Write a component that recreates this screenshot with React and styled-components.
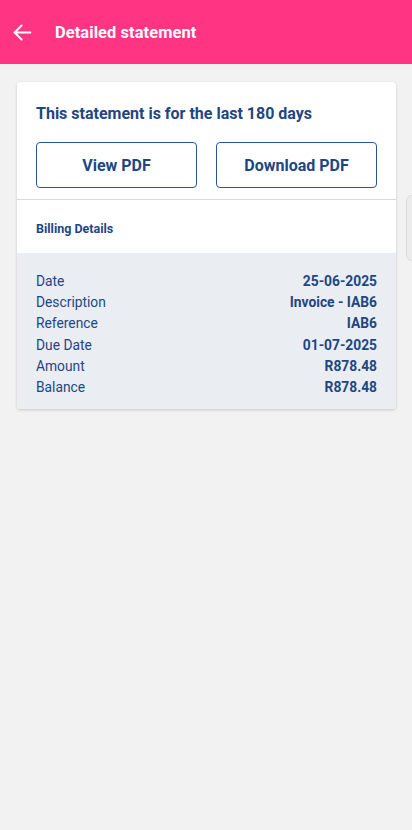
import styled, { createGlobalStyle } from "styled-components";

const GlobalStyle = createGlobalStyle`
  html, body {
    margin: 0;
    padding: 0;
    background: #f2f2f2;
    font-family: Roboto, "Noto Sans", Arial, sans-serif;
  }
  * { box-sizing: border-box; }
`;

const Page = styled.div`
  position: relative;
  min-height: 830px;
  background: #f2f2f2;
`;

const Header = styled.header`
  height: 64px;
  background: #ff3483;
  display: flex;
  align-items: center;
  padding: 0 0 0 12px;
  gap: 22px;
  color: #fff;
`;

const BackButton = styled.button`
  background: none;
  border: none;
  padding: 0;
  display: flex;
  color: #fff;
  cursor: pointer;
`;

const Title = styled.h1`
  margin: 0;
  font-size: 16.4px;
  font-weight: 700;
  letter-spacing: 0.1px;
`;

const Content = styled.main`
  padding: 18px 16px 0 17px;
`;

const Card = styled.section`
  background: #fff;
  border-radius: 4px;
  box-shadow: 0 1px 3px rgba(0, 0, 0, 0.18);
  overflow: hidden;
  color: #1e4684;
`;

const Intro = styled.div`
  padding: 20px 19px 11px;
  border-bottom: 1px solid #d9d9d9;
`;

const Lead = styled.p`
  margin: 0 0 16px;
  font-size: 16px;
  font-weight: 700;
  line-height: 24px;
`;

const ButtonRow = styled.div`
  display: grid;
  grid-template-columns: 1fr 1fr;
  gap: 19px;
`;

const OutlineButton = styled.button`
  height: 46px;
  background: #fff;
  border: 1.5px solid #2b5495;
  border-radius: 4px;
  color: #1e4684;
  font-family: inherit;
  font-size: 16px;
  font-weight: 700;
  cursor: pointer;
`;

const SectionTitle = styled.h2`
  margin: 0;
  padding: 21px 19px 16px;
  font-size: 12.5px;
  font-weight: 700;
  line-height: 16px;
`;

const Details = styled.dl`
  margin: 0;
  padding: 18px 19px 11px;
  background: #eaedf2;
  display: grid;
  grid-template-columns: 1fr auto;
  font-size: 13.8px;
  line-height: 21.2px;
`;

const Label = styled.dt`
  font-weight: 400;
`;

const Value = styled.dd`
  margin: 0;
  font-weight: 700;
  text-align: right;
`;

const EdgeTab = styled.div`
  position: absolute;
  right: -6px;
  top: 195px;
  width: 12px;
  height: 66px;
  border: 1px solid #dcdcdc;
  border-radius: 6px;
  background: #ececec;
`;

const rows = [
  ["Date", "25-06-2025"],
  ["Description", "Invoice - IAB6"],
  ["Reference", "IAB6"],
  ["Due Date", "01-07-2025"],
  ["Amount", "R878.48"],
  ["Balance", "R878.48"],
];

export default function App() {
  return (
    <Page>
      <GlobalStyle />
      <Header>
        <BackButton aria-label="Back">
          <svg width="21" height="21" viewBox="0 0 24 24" fill="none" stroke="currentColor" strokeWidth="2.2" strokeLinecap="round" strokeLinejoin="round">
            <path d="M21 12H3" />
            <path d="M11 4l-8 8 8 8" />
          </svg>
        </BackButton>
        <Title>Detailed statement</Title>
      </Header>
      <Content>
        <Card>
          <Intro>
            <Lead>This statement is for the last 180 days</Lead>
            <ButtonRow>
              <OutlineButton>View PDF</OutlineButton>
              <OutlineButton>Download PDF</OutlineButton>
            </ButtonRow>
          </Intro>
          <SectionTitle>Billing Details</SectionTitle>
          <Details>
            {rows.map(([label, value]) => [
              <Label key={label + "-l"}>{label}</Label>,
              <Value key={label + "-v"}>{value}</Value>,
            ])}
          </Details>
        </Card>
      </Content>
      <EdgeTab />
    </Page>
  );
}
